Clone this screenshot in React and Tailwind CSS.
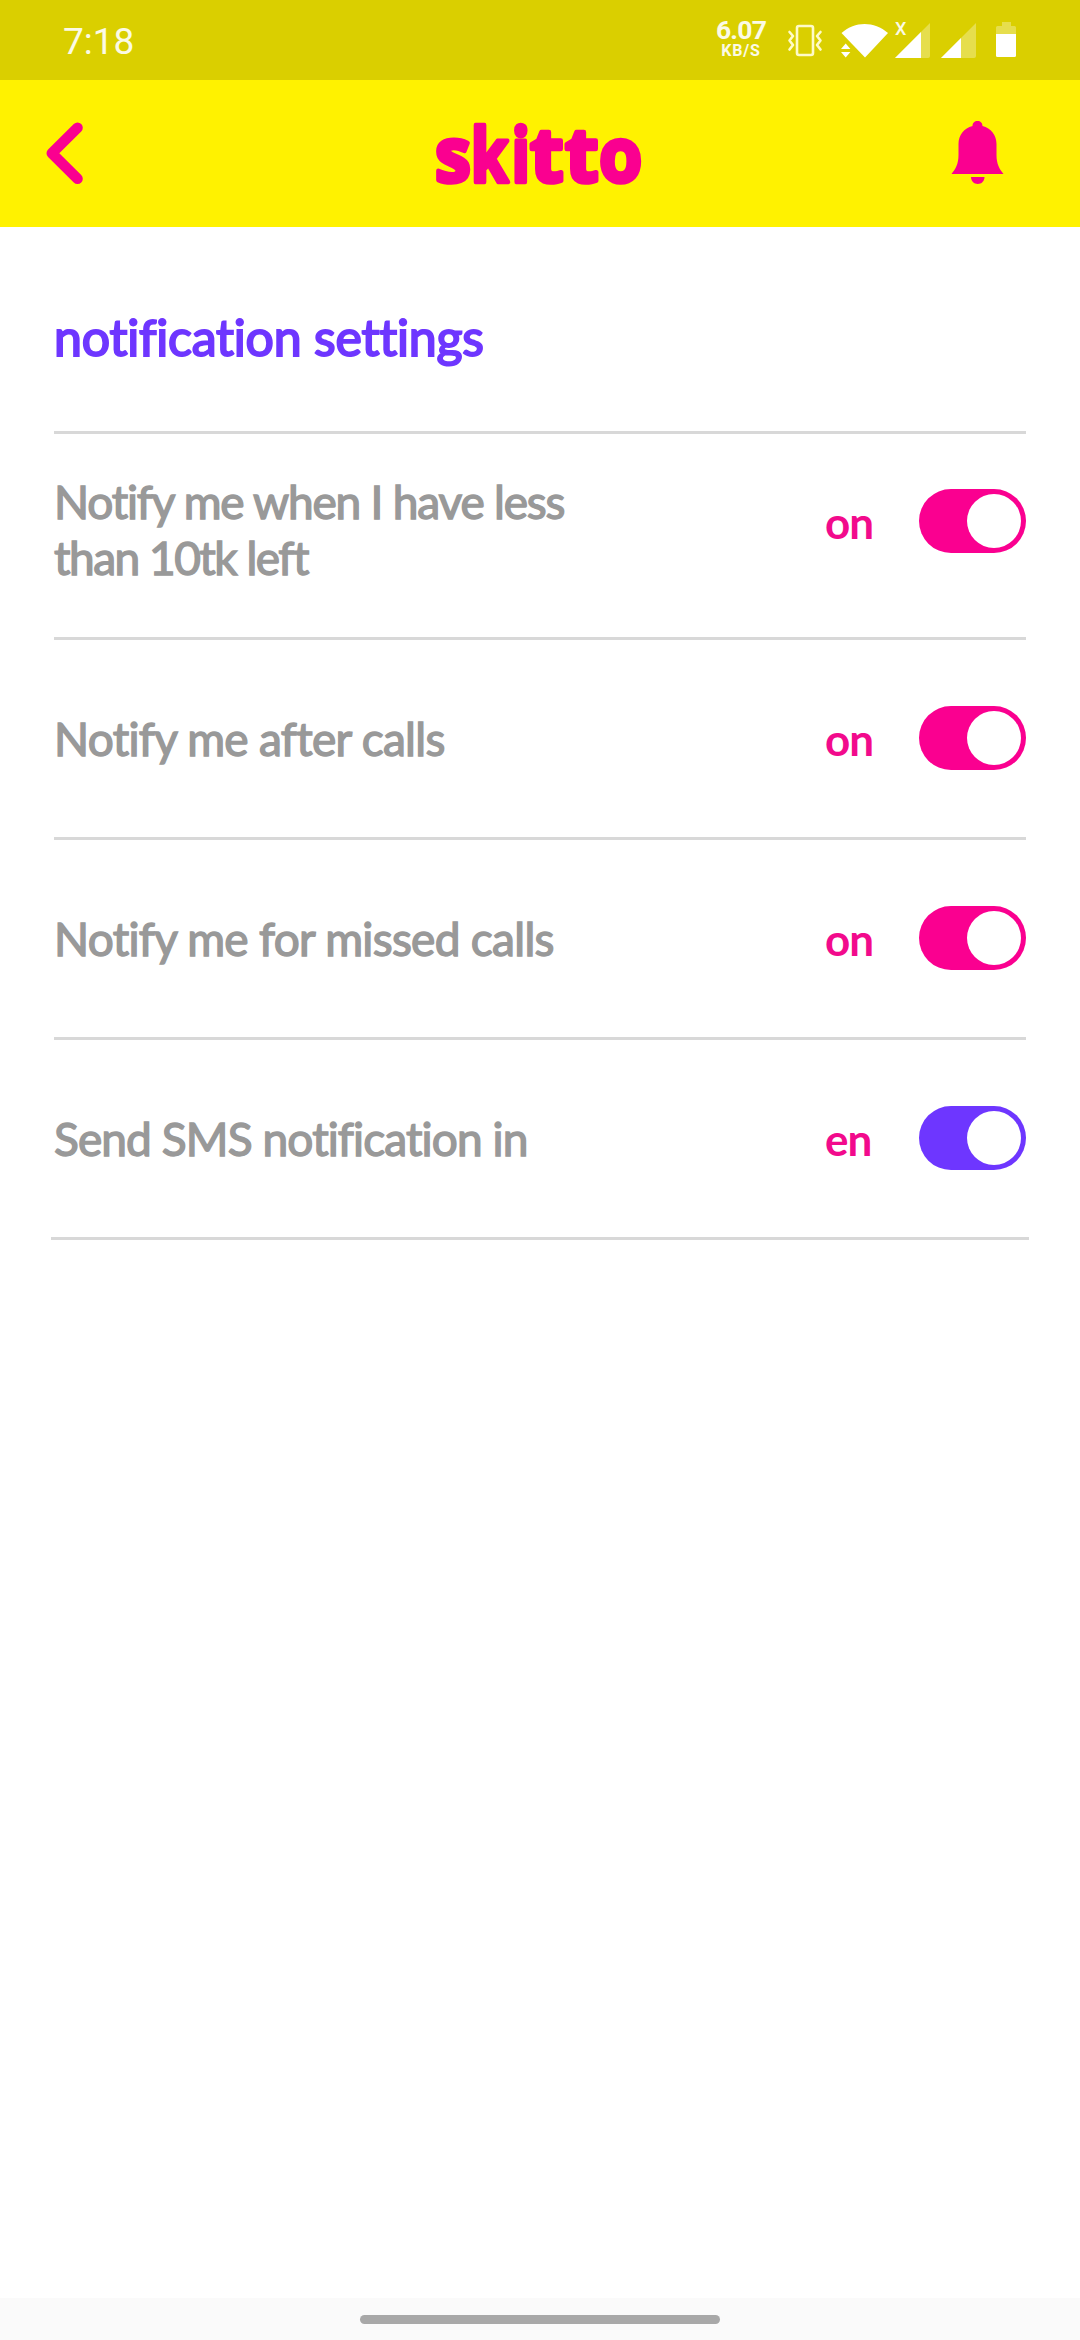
import React, { useState } from 'react';

const initialSettings = [
  {
    id: 'balance',
    lines: [
      { text: 'Notify me when I have less', spacing: 'tracking-[-1.2px]' },
      { text: 'than 10tk left', spacing: 'tracking-[-1.5px]' },
    ],
    value: true,
  },
  { id: 'calls', lines: [{ text: 'Notify me after calls', spacing: 'tracking-[-0.7px]' }], value: true },
  { id: 'missed', lines: [{ text: 'Notify me for missed calls', spacing: 'tracking-[-0.7px]' }], value: true },
  { id: 'language', lines: [{ text: 'Send SMS notification in', spacing: 'tracking-[-0.9px]' }], value: true, language: true },
];

// Each letter of the wordmark has its own offset and width
const logoLetters = [
  { char: 's', x: 9, scale: 0.95 },
  { char: 'k', x: 44.7, scale: 0.8 },
  { char: 'i', x: 85.6, scale: 0.8 },
  { char: 't', x: 104, scale: 1.02 },
  { char: 't', x: 139, scale: 1.02 },
  { char: 'o', x: 173, scale: 0.92 },
];

function StatusBar() {
  return (
    <div className="h-20 bg-[#dacf00] text-white/90 font-[Roboto,sans-serif] flex items-start pl-[63px] pr-[64px]">
      <span className="text-[37px] leading-[44px] mt-[20px]">7:18</span>

      <div className="ml-auto mt-[15px] w-[50px] flex flex-col items-center font-bold">
        <span className="text-[26.5px] leading-[29px] tracking-[-0.8px]">6.07</span>
        <span className="text-[16px] leading-[16px] tracking-[0.8px] mt-[-1px]">KB/S</span>
      </div>

      {/* Vibrate */}
      <svg className="w-[36px] h-[40px] mt-5 ml-[21px]" viewBox="0 0 36 40" fill="none" stroke="#fffbc8" strokeWidth="2.6" strokeLinejoin="round" strokeLinecap="round">
        <rect x="10" y="6" width="16" height="29" rx="2" />
        <path d="M2.500 12l3.500 4-3.500 4.500 3.500 4.500-3.500 4.500M33.500 12l-3.500 4 3.500 4.500-3.500 4.500 3.500 4.500" />
      </svg>

      {/* Wifi */}
      <svg className="w-[48px] h-[40px] mt-5 ml-[18px]" viewBox="0 0 48 40" fill="#fff">
        <path d="M0.500 13C14 1 33 1 47 13L24 37.500z" />
        <path d="M0 29l4.700-5.500 4.700 5.500zM0 32h9.400l-4.700 5.500z" />
      </svg>

      {/* Signal 1 */}
      <div className="relative ml-[6px] mt-5">
        <svg className="w-[36px] h-[40px]" viewBox="0 0 36 40">
          <path d="M0 38L35 3v33q0 2-2 2z" fill="#e6de4d" />
          <path d="M0 38L26 12v26z" fill="#fff" />
        </svg>
        <span className="absolute left-0 -top-[1px] text-[18px] leading-[20px] font-medium">X</span>
      </div>

      {/* Signal 2 */}
      <svg className="w-[36px] h-[40px] mt-5 ml-[10px]" viewBox="0 0 36 40">
        <path d="M0 38L35 3v33q0 2-2 2z" fill="#e6de4d" />
        <path d="M0 38L20 18v20z" fill="#fff" />
      </svg>

      {/* Battery */}
      <svg className="w-[20px] h-[40px] mt-5 ml-[19px]" viewBox="0 0 20 40">
        <path d="M6 2h9v4h3.500q1.500 0 1.500 1.500V14H0V7.500Q0 6 1.500 6H6z" fill="#e6de4d" />
        <path d="M0 14h20v21.500q0 1.500-1.500 1.500h-17Q0 37 0 35.500z" fill="#fff" />
      </svg>
    </div>
  );
}

function Header() {
  return (
    <header className="h-[147px] bg-[#fff200] flex items-start justify-between pl-[44px] pr-[74px]">
      <button className="mt-[39px]" aria-label="Back">
        <svg className="w-[42px] h-[68px]" viewBox="0 0 42 68" fill="none" stroke="#fa0090" strokeWidth="10.600" strokeLinecap="round" strokeLinejoin="round">
          <path d="M33.500 8.700L7.800 34.200 33.500 59.800" />
        </svg>
      </button>

      <svg
        className="w-[230px] h-[120px] mt-[14px] ml-[46px] font-['Open_Sans',sans-serif] font-bold text-[76px]"
        viewBox="0 0 230 120"
        fill="#fa0090"
        stroke="#fa0090"
        strokeWidth="4.500"
        strokeLinejoin="round"
      >
        {logoLetters.map((l, i) => (
          <text key={i} transform={`translate(${l.x} 87.5) scale(${l.scale} 1)`}>{l.char}</text>
        ))}
      </svg>

      <button className="mt-[40px]" aria-label="Notifications">
        <svg className="w-[56px] h-[66px]" viewBox="0 0 56 66" fill="#fa0090">
          <path d="M22.500 6C22.500 3 24.500 1 27.500 1s5 2 5 5C41 8 46.500 15 46.500 24v11c0 9 3 14 7 19H1.500c4-5 7-10 7-19V24C8.500 15 14 8 22.500 6z" />
          <path d="M21 57h13.500c0 4.200-3 7-6.750 7S21 61.200 21 57z" />
        </svg>
      </button>
    </header>
  );
}

function Toggle({ checked, onClick, purple }) {
  return (
    <button
      role="switch"
      aria-checked={checked}
      onClick={onClick}
      className={`w-[107px] h-16 rounded-full p-[5px] flex items-center ${checked ? 'justify-end' : 'justify-start'} ${purple ? 'bg-[#6e36ff]' : 'bg-[#fa0090]'}`}
    >
      <span className="w-[54px] h-[54px] rounded-full bg-white" />
    </button>
  );
}

function SettingRow({ item, onToggle }) {
  const tall = item.lines.length > 1;
  const state = item.language ? (item.value ? 'en' : 'bn') : item.value ? 'on' : 'off';

  return (
    <div className={`flex items-start ${tall ? 'h-[203px]' : 'h-[197px]'}`}>
      <div className={`flex-1 text-[46px] leading-[56px] text-[#999999] [-webkit-text-stroke:1.4px_#999999] ${tall ? 'pt-[40px]' : 'pt-[71px]'}`}>
        {item.lines.map((line) => (
          <p key={line.text} className={`whitespace-nowrap ${line.spacing}`}>{line.text}</p>
        ))}
      </div>
      <div className={`flex ${tall ? 'pt-[55px]' : 'pt-[66px]'}`}>
        <span className="w-[94px] mt-[5px] text-[44px] leading-[56px] font-bold text-[#f20a8c] tracking-[-1px]">{state}</span>
        <Toggle checked={item.value} onClick={onToggle} purple={item.language} />
      </div>
    </div>
  );
}

function App() {
  const [settings, setSettings] = useState(initialSettings);

  const toggle = (id) => {
    setSettings(settings.map((s) => (s.id === id ? { ...s, value: !s.value } : s)));
  };

  return (
    <div className="w-[1080px] h-[2340px] bg-white flex flex-col overflow-hidden font-[Lato,sans-serif]">
      <StatusBar />
      <Header />

      <main className="flex-1 px-[54px]">
        <h1 className="h-[204px] pt-[78px] text-[50px] leading-[64px] text-[#6e36ff] tracking-[-0.2px] [-webkit-text-stroke:2px_#6e36ff]">
          notification settings
        </h1>
        {settings.map((item) => (
          <React.Fragment key={item.id}>
            <div className="h-[3px] bg-[#d8d8d8]" />
            <SettingRow item={item} onToggle={() => toggle(item.id)} />
          </React.Fragment>
        ))}
        <div className="h-[3px] -mx-[3px] bg-[#d8d8d8]" />
      </main>

      {/* Gesture bar */}
      <div className="h-[42px] bg-[#fafafa] flex justify-center pt-[17px]">
        <div className="w-[360px] h-[9px] rounded-full bg-[#a8a8a8]" />
      </div>
    </div>
  );
}

export default App;
